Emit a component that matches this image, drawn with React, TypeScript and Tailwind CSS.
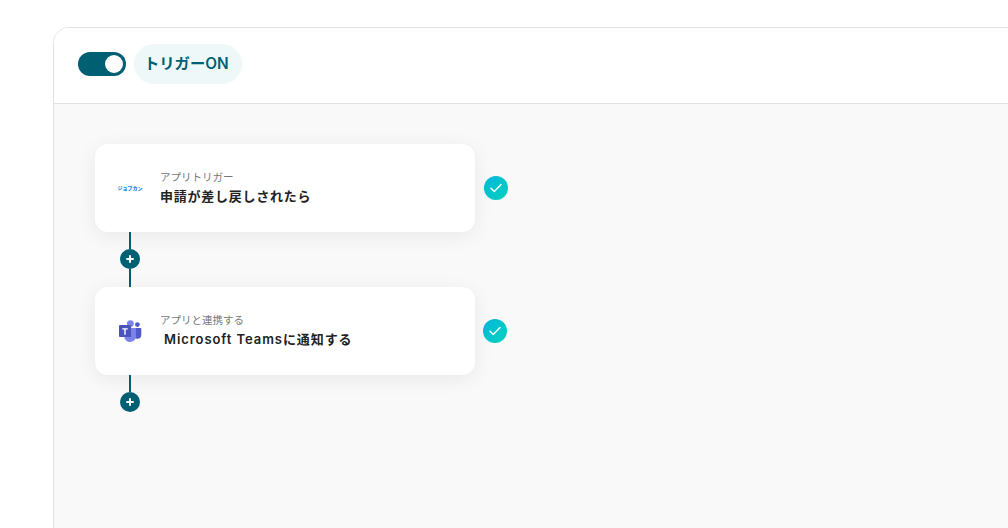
const font = "font-['Inter','Noto_Sans_CJK_JP',sans-serif]";

const TeamsLogo = () => (
	<svg width="24" height="22" viewBox="0 0 24 22" className="block">
		<circle cx="19.4" cy="4.6" r="2.4" fill="#5059C9" />
		<path d="M15.5 8h7a.8.8 0 0 1 .8.8v6a4 4 0 0 1-4 4h-.3a4 4 0 0 1-3.5-2z" fill="#5059C9" />
		<circle cx="12.4" cy="3.6" r="3.4" fill="#7B83EB" />
		<path d="M7 8h10a1 1 0 0 1 1 1v7a6 6 0 0 1-11.4 2.6z" fill="#7B83EB" />
		<rect x="1" y="5" width="12" height="12" rx="1" fill="#4B53BC" />
		<path d="M9.8 8.3H4.2v1.3h2.1v5.2h1.4V9.6h2.1z" fill="#fff" />
	</svg>
);

const Connector = () => (
	<div className="flex flex-col items-center w-5 ml-[25px]">
		<div className="w-0.5 h-[17px] bg-[#005f73]" />
		<div className="w-5 h-5 rounded-full bg-[#005f73] flex items-center justify-center">
			<svg width="8" height="8" viewBox="0 0 8 8">
				<path d="M4 1v6M1 4h6" stroke="#fff" strokeWidth="2" strokeLinecap="round" />
			</svg>
		</div>
	</div>
);

const Check = ({ className }: { className: string }) => (
	<div className={`w-6 h-6 rounded-full bg-gradient-to-br from-[#00b6dc] to-[#00d2bc] flex items-center justify-center ${className}`}>
		<svg width="12" height="10" viewBox="0 0 12 10" fill="none">
			<path d="M1 5.2 4.3 8.6 11 1.4" stroke="#fff" strokeWidth="1.4" strokeLinecap="round" strokeLinejoin="round" />
		</svg>
	</div>
);

const Card = ({ icon, label, title, check }: any) => (
	<div className="flex items-center">
		<div className="w-[380px] h-[88px] bg-white rounded-[13px] shadow-[0_4px_20px_rgba(0,0,0,0.07)] flex items-center">
			<div className="w-6 ml-[23px] mr-[18px] shrink-0 flex justify-center">{icon}</div>
			<div className="-mt-[1px]">
				<div className="text-[10.5px] leading-[16px] text-[#777]">{label}</div>
				<div className="text-[13px] tracking-[0.75px] leading-[20px] font-semibold text-[#222]">{title}</div>
			</div>
		</div>
		{check}
	</div>
);

export default function App() {
	return (
		<div className={`${font} w-[1008px] h-[528px] overflow-hidden bg-white pt-[27px] pl-[53px]`}>
			<div className="w-[1000px] h-[520px] border border-[#e2e2e2] rounded-tl-2xl overflow-hidden flex flex-col">
				<div className="h-[76px] shrink-0 bg-white border-b border-[#e2e2e2] flex items-center pl-6 pb-1 gap-2">
					<div className="w-12 h-6 rounded-full bg-[#005f73] flex items-center justify-end pr-[3px]">
						<div className="w-[18px] h-[18px] rounded-full bg-white" />
					</div>
					<div className="h-10 pl-[10px] pr-[13px] pt-px rounded-full bg-[#eff8f8] flex items-center text-[15.3px] font-semibold text-[#005f73]">
						トリガーON
					</div>
				</div>
				<div className="flex-1 bg-[#f9f9f9] pt-10 pl-[41px]">
					<Card
						icon={<span className="text-[5px] whitespace-nowrap font-black text-[#1a7fe8] leading-none">ジョブカン</span>}
						label="アプリトリガー"
						title="申請が差し戻しされたら"
						check={<Check className="ml-[9px]" />}
					/>
					<Connector />
					<div className="h-[18px] w-0.5 bg-[#005f73] ml-[34px]" />
					<Card
						icon={<TeamsLogo />}
						label="アプリと連携する"
						title={<span className="pl-1 tracking-[0.93px]">Microsoft Teamsに通知する</span>}
						check={<Check className="ml-2" />}
					/>
					<Connector />
				</div>
			</div>
		</div>
	);
}
